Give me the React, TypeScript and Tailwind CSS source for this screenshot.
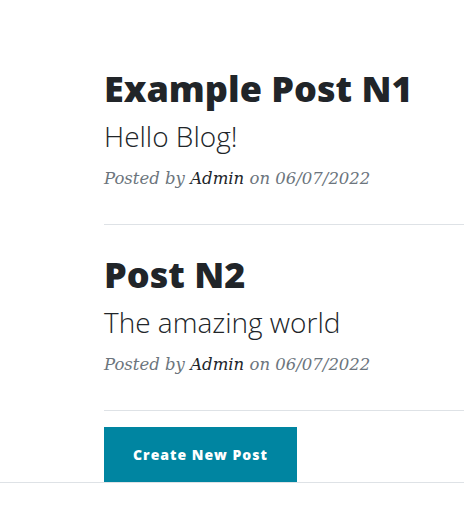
import React from "react";

interface Post {
  id: number;
  title: string;
  subtitle: string;
  author: string;
  date: string;
}

const posts: Post[] = [
  { id: 1, title: "Example Post N1", subtitle: "Hello Blog!", author: "Admin", date: "06/07/2022" },
  { id: 2, title: "Post N2", subtitle: "The amazing world", author: "Admin", date: "06/07/2022" },
];

const sans = "font-['Open_Sans',sans-serif]";
const serif = "font-['DejaVu_Serif',serif]";

function PostPreview({ post }: { post: Post }) {
  return (
    <div>
      <a href="#" className="block text-[#212529] no-underline">
        <h2 className={`${sans} text-[36px] leading-[1.2] font-extrabold`}>{post.title}</h2>
        <h3 className={`${sans} mt-[10px] text-[28px] leading-[1.2] font-light`}>{post.subtitle}</h3>
      </a>
      <p className={`${serif} mt-[11px] text-[16.5px] leading-[27px] italic text-[#6c757d]`}>
        Posted by{" "}
        <a href="#" className="text-[#212529]">
          {post.author}
        </a>{" "}
        on {post.date}
      </p>
    </div>
  );
}

export default function App() {
  return (
    <div className="min-h-screen bg-white">
      <div className="pl-[104px] pt-[67px]">
        {posts.map((post) => (
          <React.Fragment key={post.id}>
            <PostPreview post={post} />
            <hr className="mt-[32px] mb-[28px] border-0 border-t border-[#dee2e6]" />
          </React.Fragment>
        ))}
        <button
          className={`${sans} mt-[-12px] flex h-[55px] w-[193px] items-center justify-center bg-[#0085a1] text-[14px] font-extrabold tracking-[1px] text-white`}
        >
          Create New Post
        </button>
      </div>
      <div className="border-t border-[#dee2e6]" />
    </div>
  );
}
